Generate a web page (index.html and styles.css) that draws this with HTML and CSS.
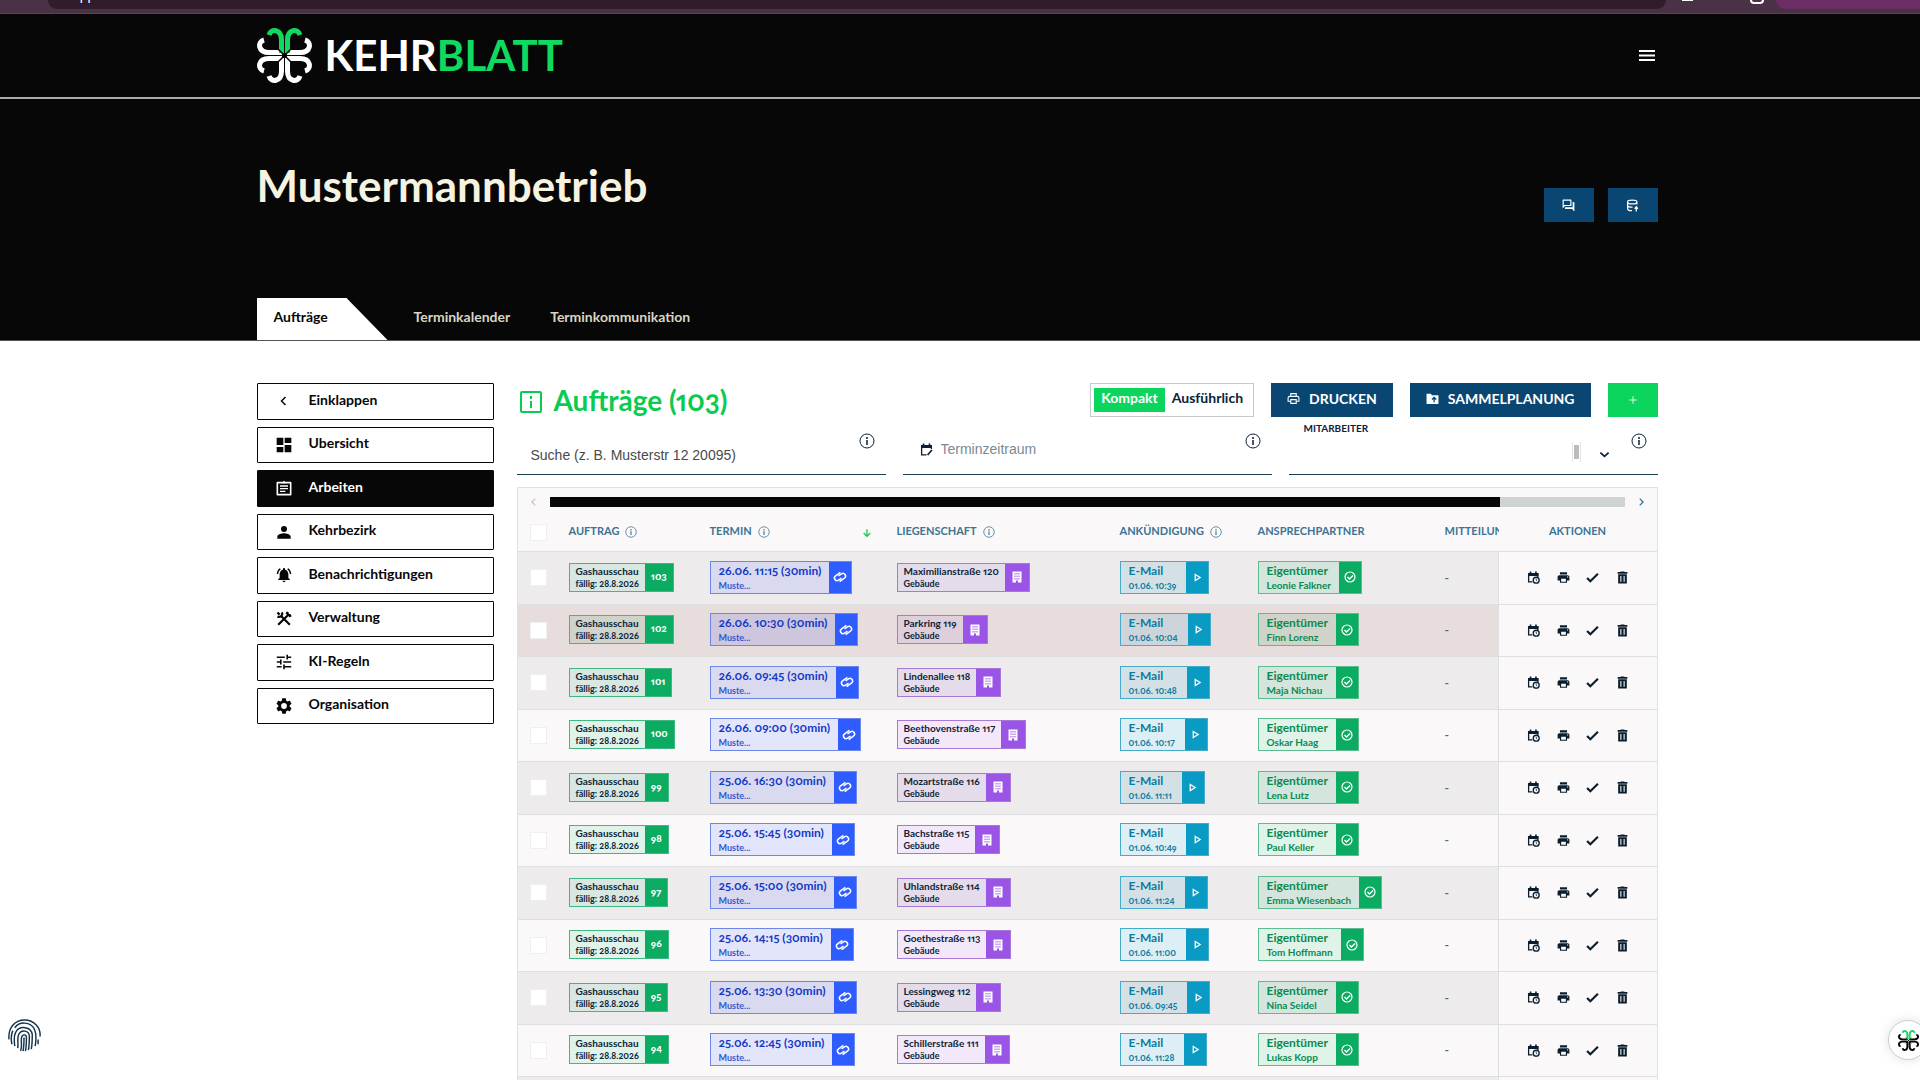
FILE: index.html
```
<!DOCTYPE html>
<html lang="de">
<head>
<meta charset="utf-8">
<title>Kehrblatt – Aufträge</title>
<link rel="stylesheet" href="styles.css">
</head>
<body>
<svg class="sprite" aria-hidden="true">
  <symbol id="clover" viewBox="0 0 55 55">
    <g fill="none" stroke="currentColor" stroke-width="5">
      <path d="M7 12C0 14 1 24.500 12 24.500H25M7 43C0 41 1 30.500 12 30.500H25"/>
      <path d="M48 12C55 14 54 24.500 43 24.500H30M48 43C55 41 54 30.500 43 30.500H30"/>
      <path d="M12 48C14 55 24.500 54 24.500 43V30M43 48C41 55 30.500 54 30.500 43V30"/>
      <path class="leaf" d="M12 7C14 0 24.500 1 24.500 12V25M43 7C41 0 30.500 1 30.500 12V25"/>
    </g>
    <path class="seam" d="M20 20L35 35M35 20L20 35" fill="none" stroke-width="1.500"/>
    <circle class="seam-dot" cx="27.500" cy="27.500" r="1.500"/>
  </symbol>
  <symbol id="i-left" viewBox="0 0 24 24"><path d="M15 4l-8 8 8 8" fill="none" stroke="currentColor" stroke-width="3"/></symbol>
  <symbol id="i-right" viewBox="0 0 24 24"><path d="M9 4l8 8-8 8" fill="none" stroke="currentColor" stroke-width="3"/></symbol>
  <symbol id="i-down" viewBox="0 0 24 24"><path d="M3 8l9 8 9-8" fill="none" stroke="currentColor" stroke-width="4"/></symbol>
  <symbol id="i-sort" viewBox="0 0 24 24"><path d="M12 3v17M4 12l8 8 8-8" fill="none" stroke="currentColor" stroke-width="3"/></symbol>
  <symbol id="i-plus" viewBox="0 0 24 24"><path d="M12 3v18M3 12h18" fill="none" stroke="currentColor" stroke-width="2"/></symbol>
  <symbol id="i-menu" viewBox="0 0 16 11"><path d="M0 1h16M0 5.500h16M0 10h16" fill="none" stroke="currentColor" stroke-width="2"/></symbol>
  <symbol id="i-info" viewBox="0 0 16 16"><circle cx="8" cy="8" r="7" fill="none" stroke="currentColor" stroke-width="1"/><path d="M8 7v5M8 4v2" fill="none" stroke="currentColor" stroke-width="1.500"/></symbol>
  <symbol id="i-infobox" viewBox="0 0 22 22"><rect x="1" y="1" width="20" height="20" rx="1" fill="none" stroke="currentColor" stroke-width="2"/><path d="M11 10v7M11 5v3" stroke="currentColor" stroke-width="2"/></symbol>
  <symbol id="i-dash" viewBox="0 0 24 24"><path fill="currentColor" d="M1 12h10V1H1v11zm0 11h10v-8H1v8zm12 0h10V12H13v11zm0-22v8h10V1H13z"/></symbol>
  <symbol id="i-work" viewBox="0 0 24 24"><path d="M2 4h20v18H2z" fill="none" stroke="currentColor" stroke-width="2.400" stroke-linejoin="round"/><path d="M8 5l4-4 4 4z" fill="currentColor"/><path d="M6 9h12M6 13h12M6 17h8" stroke="currentColor" stroke-width="2"/></symbol>
  <symbol id="i-person" viewBox="0 0 24 24"><path fill="currentColor" d="M12 12a4.500 4.500 0 1 0 0-9 4.500 4.500 0 0 0 0 9zm0 2c-3 0-10 1.500-10 5v3h20v-3c0-3.500-7-5-10-5z"/></symbol>
  <symbol id="i-bell" viewBox="1 1 22 22"><path fill="currentColor" d="M7.580 4.080L6.150 2.650C3.750 4.480 2.170 7.300 2.030 10.500h2c.15-2.650 1.510-4.970 3.550-6.420zm12.390 6.420h2c-.15-3.200-1.730-6.020-4.120-7.850l-1.420 1.430c2.020 1.450 3.390 3.770 3.540 6.420zM18 11c0-3.070-1.640-5.640-4.500-6.320V4c0-.83-.67-1.500-1.500-1.500s-1.500.67-1.500 1.500v.68C7.630 5.360 6 7.920 6 11v5l-2 2v1h16v-1l-2-2v-5zm-6 11c1.100 0 2-.9 2-2h-4c0 1.100.9 2 2 2z"/></symbol>
  <symbol id="i-tools" viewBox="1 1 22 22"><path d="M8 8l12 12M4 20L19 5" fill="none" stroke="currentColor" stroke-width="3"/><path d="M3 3l3 3M9 3c2 3-1 7-6 6M15 3l6 6M17 2l-1 3M22 7l-3 1" fill="none" stroke="currentColor" stroke-width="3"/></symbol>
  <symbol id="i-tune" viewBox="2 2 20 20"><path fill="currentColor" d="M3 17v2h6v-2H3zM3 5v2h10V5H3zm10 16v-2h8v-2h-8v-2h-2v6h2zM7 9v2H3v2h4v2h2V9H7zm14 4v-2H11v2h10zm-6-4h2V7h4V5h-4V3h-2v6z"/></symbol>
  <symbol id="i-gear" viewBox="2 2 20 20"><path fill="currentColor" d="M19.140 12.940c.04-.3.06-.61.06-.94 0-.32-.02-.64-.07-.94l2.030-1.580c.18-.14.23-.41.12-.61l-1.920-3.320c-.12-.22-.37-.29-.59-.22l-2.390.96c-.5-.38-1.030-.7-1.620-.94l-.36-2.540c-.04-.24-.24-.41-.48-.41h-3.840c-.24 0-.43.17-.47.41l-.36 2.540c-.59.24-1.130.57-1.620.94l-2.390-.96c-.22-.08-.47 0-.59.22L2.740 8.870c-.12.21-.08.47.12.61l2.030 1.580c-.05.3-.09.63-.09.94s.02.64.07.94l-2.030 1.580c-.18.14-.23.41-.12.61l1.920 3.320c.12.22.37.29.59.22l2.390-.96c.5.38 1.030.7 1.620.94l.36 2.540c.05.24.24.41.48.41h3.840c.24 0 .44-.17.47-.41l.36-2.540c.59-.24 1.130-.56 1.620-.94l2.390.96c.22.08.47 0 .59-.22l1.920-3.320c.12-.22.07-.47-.12-.61l-2.010-1.580zM12 15.600a3.600 3.600 0 1 1 0-7.200 3.600 3.600 0 0 1 0 7.200z"/></symbol>
  <symbol id="i-forum" viewBox="1 1 22 22"><path fill="currentColor" d="M15 4v7H5.170L4 12.170V4h11m1-2H3c-.55 0-1 .45-1 1v14l4-4h10c.55 0 1-.45 1-1V3c0-.55-.45-1-1-1zm5 4h-2v9H6v2c0 .55.45 1 1 1h11l4 4V7c0-.55-.45-1-1-1z"/></symbol>
  <symbol id="i-db" viewBox="0 0 24 24"><path d="M20 10V5c0-4-17-4-17 0v13c0 2 4 3.500 8 3.500M3 6c0 4 17 4 17 0M3 12c0 2 5 3.500 9 3" fill="none" stroke="currentColor" stroke-width="2.400"/><path d="M19 23v-8M16 18l3-3.500 3 3.500" fill="none" stroke="currentColor" stroke-width="2.400"/></symbol>
  <symbol id="i-print" viewBox="1 1 22 22"><path fill="currentColor" d="M19 8H5c-1.660 0-3 1.340-3 3v6h4v4h12v-4h4v-6c0-1.660-1.340-3-3-3zm-3 11H8v-5h8v5zm3-7a1 1 0 1 1 0-2 1 1 0 0 1 0 2zm-1-9H6v4h12V3z"/></symbol>
  <symbol id="i-printline" viewBox="0 0 24 24"><path d="M7 8V3h10v5M6 17H2v-6c0-2 1-3 3-3h14c2 0 3 1 3 3v6h-4M7 14h10v7H7z" fill="none" stroke="currentColor" stroke-width="2"/></symbol>
  <symbol id="i-folder" viewBox="0 0 24 24"><path fill="currentColor" d="M1 3h8l2 3h12v16H1z"/><path d="M15 19v-8M11 14l4-4 4 4" fill="none" stroke="#0a4672" stroke-width="2.400"/></symbol>
  <symbol id="i-range" viewBox="0 0 24 24"><path d="M12 22H3V5h18v6" fill="none" stroke="currentColor" stroke-width="2.400"/><path d="M2 4h20v5H2zM5 1h3v4H5zM16 1h3v4h-3z" fill="currentColor"/><path d="M14 22l8-9" stroke="currentColor" stroke-width="3"/></symbol>
  <symbol id="i-sched" viewBox="0 0 24 24"><path d="M10 20H3V5h17v6" fill="none" stroke="currentColor" stroke-width="2.400"/><path d="M2 4h19v5H2zM5 1h3v4H5zM15 1h3v4h-3z" fill="currentColor"/><circle cx="17" cy="17" r="5.500" fill="none" stroke="currentColor" stroke-width="2.400"/><path d="M17 14v3l2 2" fill="none" stroke="currentColor" stroke-width="1.500"/></symbol>
  <symbol id="i-check" viewBox="0 0 24 24"><path d="M2 13l6 6L22 5" fill="none" stroke="currentColor" stroke-width="4"/></symbol>
  <symbol id="i-trash" viewBox="0 0 24 24"><path fill="currentColor" fill-rule="evenodd" d="M3 2h5l1-1h6l1 1h5v3H3zM4 6h16v17H4zM8 9v11h2V9zM14 9v11h2V9z"/></symbol>
  <symbol id="i-link" viewBox="0 0 24 24"><g fill="none" stroke="currentColor" stroke-width="2.600" transform="rotate(-35 12 12)"><path d="M13 15H7a4.500 4.500 0 0 1 0-9h10"/><path d="M11 9h6a4.500 4.500 0 0 1 0 9H7"/></g></symbol>
  <symbol id="i-house" viewBox="0 0 20 24"><path fill="currentColor" fill-rule="evenodd" d="M1 1h18v22h-7v-4H8v4H1zM5 4v3h2V4zM9 4v3h2V4zM13 4v3h2V4zM5 9v3h2V9zM9 9v3h2V9zM13 9v3h2V9zM5 14v3h2v-3zM9 14v3h2v-3zM13 14v3h2v-3z"/></symbol>
  <symbol id="i-play" viewBox="0 0 24 24"><path d="M6 4l13 8-13 8z" fill="none" stroke="currentColor" stroke-width="3.400"/></symbol>
  <symbol id="i-ok" viewBox="0 0 24 24"><circle cx="12" cy="12" r="10" fill="none" stroke="currentColor" stroke-width="2.400"/><path d="M7 12l4 4 7-7" fill="none" stroke="currentColor" stroke-width="2.800"/></symbol>
  <symbol id="i-finger" viewBox="0 0 34 34"><g fill="none" stroke="currentColor" stroke-width="1.500"><path d="M1 21C0 9 7 1 17 1s17 8 16 17M31 21v5M4 26C3 21 3 16 5 12M7 9C12 2 23 3 27 10c2 4 2 12 1 18M7 28C6 21 6 17 8 13.500 12 6 24 8 25 16c0 5 0 10-1 15M10 30c1-5-1-9 1-14 3-6 11-4 11 2 0 5 0 9-1 14M13 33c2-6 0-9 1-14 1-4 5-3 5 0 0 5 0 9-1 14M16.500 19c0 4 0 9-1 14"/></g></symbol>
</svg>

<div class="browser-bar">
  <div class="address"><span>app.kehrblatt.de</span></div>
  <div class="bar-icons"><i class="bar-square"></i><i class="bar-circle"></i></div>
  <div class="profile"></div>
</div>

<header class="topbar">
  <div class="container topbar-row">
    <a class="logo" href="#"><svg class="logo-mark"><use href="#clover"/></svg><span>KEHR<span class="logo-green">BLATT</span></span></a>
    <button class="menu" aria-label="Menü"><svg><use href="#i-menu"/></svg></button>
  </div>
</header>

<section class="hero">
  <div class="container hero-inner">
    <div class="hero-row">
      <h1>Mustermannbetrieb</h1>
      <div class="hero-actions">
        <button class="btn btn-square" aria-label="Nachrichten"><svg class="ic13"><use href="#i-forum"/></svg></button>
        <button class="btn btn-square" aria-label="Datenbank"><svg class="ic13"><use href="#i-db"/></svg></button>
      </div>
    </div>
    <nav class="tabs">
      <a class="tab tab-active" href="#">Aufträge</a>
      <a class="tab" href="#">Terminkalender</a>
      <a class="tab" href="#">Terminkommunikation</a>
    </nav>
  </div>
</section>

<main>
 <div class="container content">
  <nav class="side">
    <a href="#"><svg class="small"><use href="#i-left"/></svg>Einklappen</a>
    <a href="#"><svg><use href="#i-dash"/></svg>Ubersicht</a>
    <a href="#" class="active"><svg><use href="#i-work"/></svg>Arbeiten</a>
    <a href="#"><svg><use href="#i-person"/></svg>Kehrbezirk</a>
    <a href="#"><svg><use href="#i-bell"/></svg>Benachrichtigungen</a>
    <a href="#"><svg><use href="#i-tools"/></svg>Verwaltung</a>
    <a href="#"><svg><use href="#i-tune"/></svg>KI-Regeln</a>
    <a href="#"><svg><use href="#i-gear"/></svg>Organisation</a>
  </nav>

  <section class="orders">
    <div class="orders-head">
      <h2><svg><use href="#i-infobox"/></svg>Aufträge (103)</h2>
      <div class="tools">
        <div class="switch"><button class="on">Kompakt</button><button>Ausführlich</button></div>
        <button class="btn"><svg class="ic13"><use href="#i-printline"/></svg>DRUCKEN</button>
        <button class="btn"><svg class="ic13"><use href="#i-folder"/></svg>SAMMELPLANUNG</button>
        <button class="btn btn-square btn-green" aria-label="Neu"><svg class="ic10"><use href="#i-plus"/></svg></button>
      </div>
    </div>

    <div class="filters">
      <div class="field">
        <input class="field-search" type="text" aria-label="Suche" placeholder="Suche (z. B. Musterstr 12 20095)">
        <svg class="field-info"><use href="#i-info"/></svg>
      </div>
      <div class="field">
        <svg class="field-icon"><use href="#i-range"/></svg>
        <input class="field-range" type="text" aria-label="Terminzeitraum" placeholder="Terminzeitraum">
        <svg class="field-info"><use href="#i-info"/></svg>
      </div>
      <div class="field">
        <label class="field-label" for="staff">MITARBEITER</label>
        <input id="staff" class="field-range" type="text">
        <span class="mini-scroll"></span>
        <svg class="field-caret"><use href="#i-down"/></svg>
        <svg class="field-info"><use href="#i-info"/></svg>
      </div>
    </div>

    <div class="table-box">
      <div class="scroller">
        <svg class="muted"><use href="#i-left"/></svg>
        <div class="track"><div class="thumb"></div></div>
        <svg><use href="#i-right"/></svg>
      </div>
      <table>
        <colgroup><col class="c-check"><col class="c-order"><col class="c-date"><col><col class="c-notice"><col class="c-contact"><col class="c-message"><col class="c-actions"></colgroup>
        <thead>
          <tr>
            <th class="check"><input type="checkbox" aria-label="Alle auswählen"></th>
            <th>AUFTRAG<svg><use href="#i-info"/></svg></th>
            <th><span class="sort-head"><span>TERMIN<svg><use href="#i-info"/></svg></span><svg class="sort"><use href="#i-sort"/></svg></span></th>
            <th>LIEGENSCHAFT<svg><use href="#i-info"/></svg></th>
            <th>ANKÜNDIGUNG<svg><use href="#i-info"/></svg></th>
            <th>ANSPRECHPARTNER</th>
            <th>MITTEILUNG</th>
            <th class="center">AKTIONEN</th>
          </tr>
        </thead>
        <tbody id="rows"></tbody>
      </table>
    </div>
  </section>
 </div>
</main>

<button class="float-finger" aria-label="Anmelden"><svg><use href="#i-finger"/></svg></button>
<button class="float-clover" aria-label="Kehrblatt"><svg><use href="#clover"/></svg></button>
<script src="rows.js"></script>
</body>
</html>
```
FILE: styles.css
```
* { box-sizing: border-box; }
body {
  margin: 0;
  height: 100vh;
  overflow: hidden;
  background: #fff;
  color: #070707;
  font-family: Lato, "Open Sans", sans-serif;
  font-weight: 700;
  font-variant-numeric: oldstyle-nums proportional-nums;
}
button, input { font: inherit; color: inherit; }
button { border: 0; padding: 0; background: none; }
a { color: inherit; text-decoration: none; }
svg { display: block; flex: none; }
.sprite { position: absolute; width: 0; height: 0; }
.topbar, .hero, main { padding-right: 6px; }
.container { width: 1401px; max-width: 100%; margin: 0 auto; }

.browser-bar {
  display: flex;
  height: 14px;
  padding-left: 48px;
  overflow: hidden;
  background: #4a3145;
  border-bottom: 1px solid #5a4356;
}
.address {
  display: flex;
  flex: 1;
  align-items: flex-end;
  height: 9px;
  padding: 0 0 5px 24px;
  border-radius: 0 0 12px 12px;
  background: #301c2c;
  color: #fff;
  font: 14px/18px "Liberation Sans", sans-serif;
}
.bar-icons { display: flex; align-items: flex-start; justify-content: space-between; width: 110px; padding: 0 12px 0 16px; }
.bar-square { width: 11px; height: 1px; background: #fff; }
.bar-circle { width: 14px; height: 4px; border: solid #fff; border-width: 0 2px 2px; border-radius: 0 0 7px 7px; }
.profile { width: 144px; height: 9px; border-radius: 0 0 0 12px; background: #6b2d64; }

.topbar { background: #070707; border-bottom: 2px solid #a9aaa9; }
.topbar-row { display: flex; align-items: center; justify-content: space-between; height: 83px; }
.logo { display: flex; align-items: center; gap: 13px; color: #fff; font-size: 42px; line-height: 55px; }
.logo-green { color: #10d95f; }
.leaf { stroke: #10d95f; }
.logo-mark { width: 55px; height: 55px; }
.seam { stroke: #070707; }
.menu { padding: 0 3px 0 0; color: #fff; }
.menu svg { width: 16px; height: 11px; }

.hero { background: #070707; border-bottom: 1px solid #555; }
.hero-inner { display: flex; flex-direction: column; justify-content: space-between; height: 241px; padding-top: 58px; }
.hero-row { display: flex; justify-content: space-between; }
h1 { margin: 0; color: #f6f3e1; font-size: 44px; line-height: 56px; }
.hero-actions { display: flex; gap: 14px; padding-top: 31px; }
.btn {
  display: flex;
  align-items: center;
  justify-content: center;
  gap: 9px;
  height: 34px;
  padding: 0 16px 3px;
  background: #0a4672;
  color: #fff;
  font-size: 14px;
}
.btn-square { width: 50px; padding: 0; }
.btn-green { background: #0bd55c; }
.ic13 { width: 13px; height: 13px; }
.ic10 { width: 10px; height: 10px; }

.tabs { display: flex; }
.tab { height: 42px; padding: 0 20px; color: #d9d5c3; font-size: 14px; line-height: 38px; }
.tab-active { width: 131px; margin-right: 6px; padding: 0 17px; background: #fff; color: #070707; clip-path: polygon(0 0, 90px 0, 100% 100%, 0 100%); }

.content { display: flex; align-items: flex-start; gap: 23px; padding-top: 42px; }
.side { display: grid; grid-auto-rows: 1fr; gap: 7px; flex: none; width: 237px; height: 341px; }
.side a { display: flex; align-items: center; gap: 17px; padding: 0 0 4px 18px; border: 1px solid #070707; border-radius: 1px; font-size: 14px; }
.side svg { width: 16px; height: 16px; margin-top: 4px; }
.side .small { padding: 2px; }
.side .active { background: #070707; color: #fff; }

.orders { flex: 1; min-width: 0; }
.orders-head { display: flex; justify-content: space-between; height: 34px; }
h2 { display: flex; align-items: center; gap: 12px; margin: 0; padding-left: 3px; color: #0acb50; font-size: 28px; line-height: 34px; }
h2 svg { width: 22px; height: 22px; margin-top: 3px; }
.tools { display: flex; gap: 17px; }
.switch { display: flex; align-items: center; padding: 0 3px; border: 1px solid #c9c9c9; }
.switch button { height: 24px; padding: 0 7px 4px; font-size: 14px; line-height: 20px; color: #0b2238; }
.switch .on { background: #0bd55c; color: #fff; }

.filters { display: grid; grid-template-columns: repeat(3, 1fr); gap: 17px; }
.field { display: flex; align-items: flex-start; position: relative; height: 58px; padding-left: 14px; border-bottom: 1px solid #1b4052; color: #0b2238; }
.field input { flex: 1; min-width: 0; height: 20px; padding: 0; border: 0; outline: 0; background: none; color: #333; font: 14px/20px "Liberation Sans", Arial, sans-serif; }
.field .field-search { margin-top: 28px; }
.field .field-range { margin-top: 22px; }
.field-search::placeholder { color: #4a4a4a; }
.field-range::placeholder { color: #7b8a93; }
.field-icon { width: 13px; height: 13px; margin: 26px 8px 0 3px; }
.field-info { width: 16px; height: 16px; margin: 16px 11px 0 21px; }
.field-label { position: absolute; top: 5px; left: 15px; font-size: 10px; line-height: 12px; }
.mini-scroll { width: 9px; height: 20px; margin: 25px 18px 0 0; border: solid #e4e4e4; border-width: 0 1px; background: linear-gradient(#bbb, #bbb) center / 5px 14px no-repeat; }
.field-caret { width: 11px; height: 11px; margin-top: 32px; }

.table-box { margin-top: 12px; background: #faf8f9; border: 1px solid #e2e1e2; }
.scroller { display: flex; align-items: center; gap: 11px; height: 27px; padding: 0 11px; color: #2e6f99; }
.scroller svg { width: 10px; height: 10px; }
.scroller .muted { color: #c4c4c4; }
.track { flex: 1; height: 10px; padding-right: 125px; background: #d0d3d3; }
.thumb { height: 10px; background: #070707; }

table { width: 100%; table-layout: fixed; border-collapse: collapse; }
.c-check { width: 37px; }
.c-order { width: 141px; }
.c-date { width: 187px; }
.c-notice { width: 138px; }
.c-contact { width: 187px; }
.c-message { width: 68px; }
.c-actions { width: 158px; }
th { height: 36px; padding: 0 0 4px 14px; overflow: hidden; color: #3d7394; font-size: 11px; text-align: left; white-space: nowrap; }
th.center { padding-left: 0; text-align: center; }
th svg { display: inline-block; width: 12px; height: 12px; margin-left: 6px; vertical-align: -3px; }
.sort-head { display: flex; justify-content: space-between; padding-right: 11px; }
th .sort { width: 10px; height: 10px; margin: 4px 0 0; color: #0acb50; }
td { height: 53px; padding: 0 0 1px 14px; border-top: 1px solid #dedfe0; }
tr:nth-child(even) td { height: 52px; }
tbody tr:nth-child(odd) td { background: #edebec; }
tbody tr.late td { background: #e8dddd; }
tbody tr td.actions-cell, tbody tr.late td.actions-cell { padding: 0 28px; background: #faf8f9; border-left: 1px solid #dedfe0; }
.check, td.check { padding: 0 0 0 12px; }
input[type="checkbox"] { display: block; appearance: none; width: 17px; height: 17px; margin: 0; border: 1px solid #f0eff0; background: #fff; }
.dash { color: #666; font-size: 12px; }

.tag { display: inline-flex; vertical-align: middle; border: 1px solid; white-space: nowrap; }
.tag-text { padding: 0 6px; }
.tag-text b, .tag-text small { display: block; font-weight: 700; }
.tag b { font-size: 10px; line-height: 14px; }
.tag small { padding-bottom: 1px; font-size: 9px; line-height: 12px; }
.tag-big b { font-size: 12px; line-height: 17px; }
.tag-big small { padding-bottom: 1px; line-height: 13px; }
.tag-big .tag-text { padding: 0 8px; }
.tag-end { display: flex; align-items: center; justify-content: center; min-width: 22px; color: #fff; }
.tag-end svg { width: 12px; height: 12px; }
.order { border-color: #3fb884; background: #0bab62; color: #0d2438; }
.order .tag-text { background: #d8e7e0; }
.order .tag-end { padding: 0 6px 3px; font-size: 10px; font-weight: 900; }
.date { border-color: #6c87e8; background: #2f5cff; color: #1238c8; }
.date .tag-text { background: #d9daef; }
.date small { color: #3358cc; }
.date svg { width: 14px; height: 14px; }
.place { border-color: #a878d6; background: #9a55e6; color: #0d2438; }
.place .tag-text { background: #e4dcea; }
.place .tag-end { width: 24px; }
.place svg { width: 10px; height: 12px; }
.notice { border-color: #45abc8; background: #0a9bc4; color: #0b7ba0; }
.notice .tag-text { padding-right: 10px; background: #d3e1e7; }
.notice svg { width: 9px; height: 9px; }
.contact { border-color: #5dbb90; background: #0bab62; color: #0c8a4e; }
.contact .tag-text { background: #d3e5dc; }
.contact small { font-size: 10px; }
tr:nth-child(even) .order .tag-text, tr:nth-child(even) .contact .tag-text { background: #dff3e9; }
tr:nth-child(even) .date .tag-text { background: #e3e5fb; }
tr:nth-child(even) .place .tag-text { background: #f2e8f9; }
tr:nth-child(even) .notice .tag-text { background: #ddeff5; }
tbody tr.late .order .tag-text, tbody tr.late .contact .tag-text { background: #d0d3c9; }
tbody tr.late .date .tag-text { background: #cdc6dc; }
tbody tr.late .place .tag-text { background: #dfcfdd; }
tbody tr.late .notice .tag-text { background: #cdd5da; }
.actions { display: flex; justify-content: space-between; color: #0b1e2e; }
.actions svg { width: 13px; height: 13px; }

.float-finger { position: fixed; left: 8px; bottom: 28px; color: #14344c; }
.float-finger svg { width: 33px; height: 33px; }
.float-clover { position: fixed; right: -8px; bottom: 20px; display: grid; place-items: center; width: 40px; height: 40px; border: 1px solid #ccc; border-radius: 50%; background: #fff; color: #070707; box-shadow: 0 0 12px rgba(0, 0, 0, 0.12); }
.float-clover svg { width: 21px; height: 21px; }
```
FILE: rows.js
```
const orders = [
  [103, "26.06. 11:15", "Maximilianstraße 120", "10:39", "Leonie Falkner"],
  [102, "26.06. 10:30", "Parkring 119", "10:04", "Finn Lorenz"],
  [101, "26.06. 09:45", "Lindenallee 118", "10:48", "Maja Nichau"],
  [100, "26.06. 09:00", "Beethovenstraße 117", "10:17", "Oskar Haag"],
  [99, "25.06. 16:30", "Mozartstraße 116", "11:11", "Lena Lutz"],
  [98, "25.06. 15:45", "Bachstraße 115", "10:49", "Paul Keller"],
  [97, "25.06. 15:00", "Uhlandstraße 114", "11:24", "Emma Wiesenbach"],
  [96, "25.06. 14:15", "Goethestraße 113", "11:00", "Tom Hoffmann"],
  [95, "25.06. 13:30", "Lessingweg 112", "09:45", "Nina Seidel"],
  [94, "25.06. 12:45", "Schillerstraße 111", "11:28", "Lukas Kopp"]
];
const icon = name => `<svg><use href="#i-${name}"/></svg>`;
const tag = (kind, title, sub, end) =>
  `<span class="tag ${kind}"><span class="tag-text"><b>${title}</b><small>${sub}</small></span><span class="tag-end">${end}</span></span>`;
const action = (name, label) => `<button aria-label="${label}">${icon(name)}</button>`;

document.getElementById("rows").innerHTML = orders.map(([id, date, place, time, person]) => `
  <tr class="${id === 102 ? "late" : ""}">
    <td class="check"><input type="checkbox" aria-label="Auftrag ${id}"></td>
    <td>${tag("order", "Gashausschau", "fällig: 28.8.2026", id)}</td>
    <td>${tag("date tag-big", date + " (30min)", "Muste...", icon("link"))}</td>
    <td>${tag("place", place, "Gebäude", icon("house"))}</td>
    <td>${tag("notice tag-big", "E-Mail", "01.06. " + time, icon("play"))}</td>
    <td>${tag("contact tag-big", "Eigentümer", person, icon("ok"))}</td>
    <td class="dash">-</td>
    <td class="actions-cell"><div class="actions">${action("sched", "Terminieren")}${action("print", "Drucken")}${action("check", "Erledigt")}${action("trash", "Löschen")}</div></td>
  </tr>`).join("") + '<tr><td colspan="7"></td><td class="actions-cell"></td></tr>';
```
